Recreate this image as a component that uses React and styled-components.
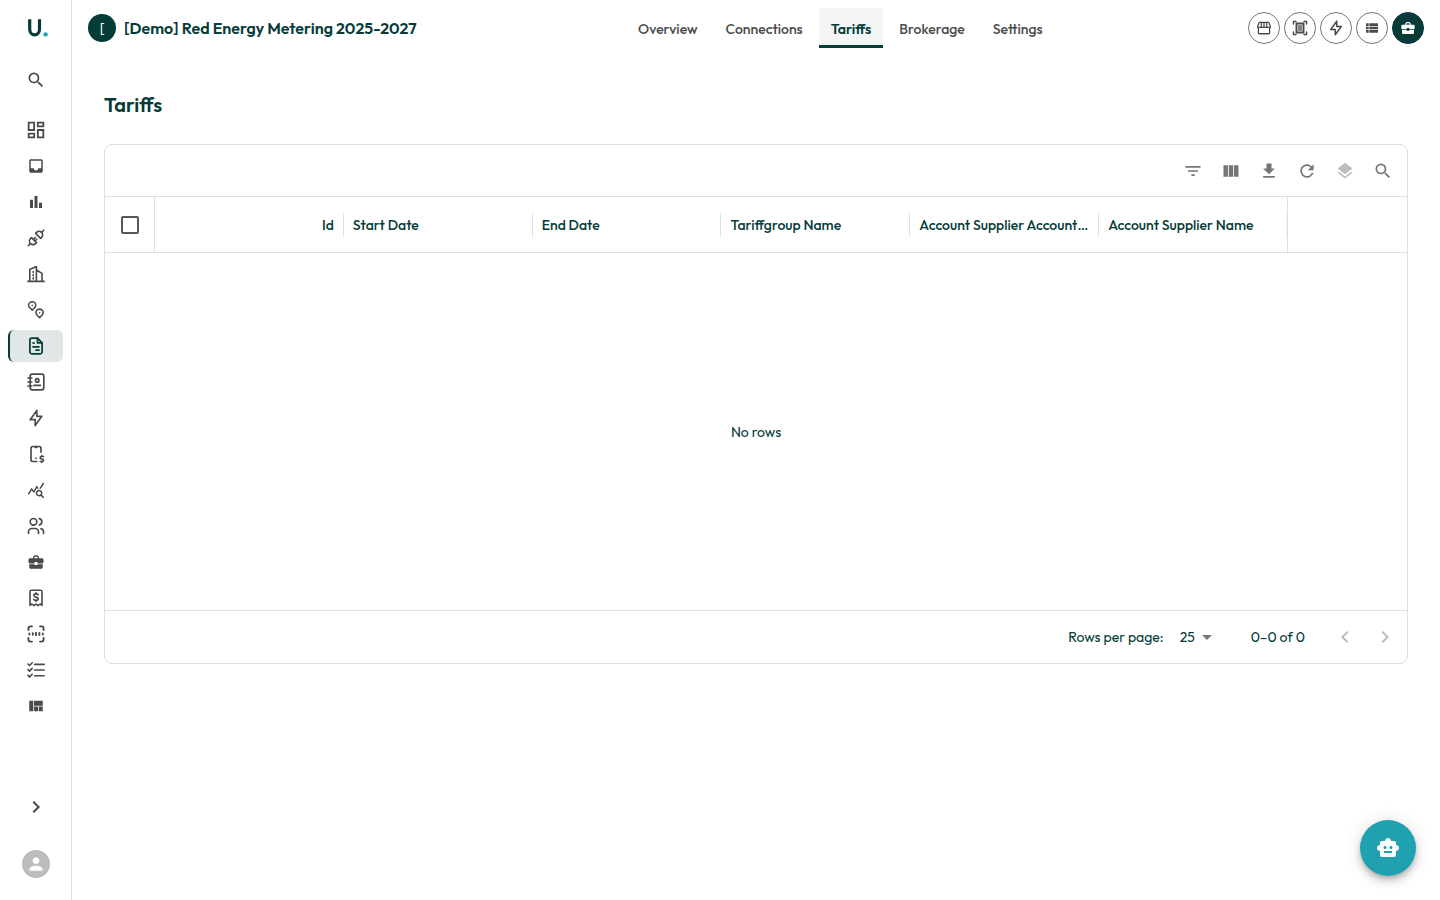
import styled, { createGlobalStyle, css } from "styled-components";
import {
  MdArrowDropDown,
  MdBarChart,
  MdBusinessCenter,
  MdChevronLeft,
  MdChevronRight,
  MdFilterList,
  MdGetApp,
  MdInbox,
  MdLayers,
  MdOutlineDashboard,
  MdPerson,
  MdQueryStats,
  MdRefresh,
  MdSearch,
  MdSmartToy,
  MdViewColumn,
  MdViewList,
  MdViewQuilt,
} from "react-icons/md";
import { TbBolt, TbDeviceMobileDollar, TbUsers } from "react-icons/tb";

const colors = {
  primary: "#053b38",
  accent: "#1fa1b0",
  icon: "#4a4a4a",
  muted: "#757575",
  disabled: "#bdbdbd",
  line: "#e0e0e0",
};

const GlobalStyle = createGlobalStyle`
  * {
    box-sizing: border-box;
  }
  body {
    margin: 0;
    background: #fff;
    color: ${colors.primary};
    font-family: Outfit, Lato, "Liberation Sans", sans-serif;
    font-size: 14px;
    line-height: 20px;
  }
  button, select {
    font: inherit;
    color: inherit;
    border: 0;
    padding: 0;
    background: none;
    cursor: pointer;
  }
  a {
    color: inherit;
    text-decoration: none;
  }
  svg {
    display: block;
    flex-shrink: 0;
  }
`;

const Page = styled.div`
  display: flex;
  min-height: 100vh;
`;

const Sidebar = styled.aside`
  width: 72px;
  flex-shrink: 0;
  border-right: 1px solid ${colors.line};
  display: flex;
  flex-direction: column;
  align-items: stretch;
  padding: 0 8px 20px;
  color: ${colors.icon};
`;

const Logo = styled.a`
  height: 56px;
  display: flex;
  align-items: center;
  justify-content: center;
  padding-left: 4px;
`;

const SideButton = styled.button`
  height: 48px;
  display: flex;
  align-items: center;
  justify-content: center;
`;

const SideNav = styled.nav`
  display: flex;
  flex-direction: column;
  gap: 4px;
  margin-top: 10px;
`;

const SideLink = styled.a`
  height: 32px;
  padding-right: 1px;
  display: flex;
  align-items: center;
  justify-content: center;
  border-left: 2px solid transparent;
  border-radius: 6px;
  ${(props) =>
    props.$active &&
    css`
      color: ${colors.primary};
      background: #e1e7e7;
      border-left-color: ${colors.primary};
    `}
`;

const SideFooter = styled.div`
  margin-top: auto;
  display: flex;
  flex-direction: column;
`;

const Avatar = styled.span`
  width: 28px;
  height: 28px;
  border-radius: 50%;
  display: flex;
  align-items: center;
  justify-content: center;
  font-size: 14px;
  font-weight: 400;
  color: #fff;
  background: ${(props) => (props.$grey ? colors.disabled : colors.primary)};
`;

const AccountButton = styled(SideButton)`
  height: 32px;
  margin-top: 17px;
`;

const Main = styled.div`
  flex: 1;
  min-width: 0;
`;

const Header = styled.header`
  height: 56px;
  padding: 0 16px;
  display: flex;
  align-items: center;
  justify-content: space-between;
`;

const Project = styled.div`
  display: flex;
  align-items: center;
  gap: 8px;
  padding-right: 16px;
  font-size: 16px;
  font-weight: 600;
`;

const Tabs = styled.nav`
  display: flex;
  gap: 4px;
`;

const Tab = styled.a`
  height: 40px;
  padding: 4px 12px 0;
  display: flex;
  align-items: center;
  font-weight: 500;
  color: ${colors.icon};
  border-bottom: 3px solid transparent;
  ${(props) =>
    props.$active &&
    css`
      font-weight: 600;
      color: ${colors.primary};
      background: #f4f6f6;
      border-bottom-color: ${colors.primary};
    `}
`;

const Actions = styled.div`
  display: flex;
  gap: 4px;
`;

const RoundButton = styled.button`
  width: 32px;
  height: 32px;
  border-radius: 50%;
  display: flex;
  align-items: center;
  justify-content: center;
  && {
    color: ${(props) => (props.$filled ? "#fff" : colors.icon)};
    background: ${(props) => (props.$filled ? colors.primary : "#fff")};
    border: 1px solid ${(props) => (props.$filled ? colors.primary : "#757877")};
  }
`;

const Content = styled.main`
  padding: 33px 32px 32px;
`;

const Title = styled.h1`
  margin: 0 0 23px;
  font-size: 20px;
  line-height: 32px;
  font-weight: 600;
`;

const Grid = styled.section`
  border: 1px solid ${colors.line};
  border-radius: 8px;
`;

const Toolbar = styled.div`
  height: 51px;
  padding: 0 8px;
  display: flex;
  align-items: center;
  justify-content: flex-end;
  gap: 6px;
`;

const ToolButton = styled.button`
  width: 32px;
  height: 32px;
  display: flex;
  align-items: center;
  justify-content: center;
  && {
    color: ${colors.muted};
  }
  &&:disabled {
    color: ${colors.disabled};
    cursor: default;
  }
`;

const Table = styled.table`
  width: 100%;
  table-layout: fixed;
  border-collapse: separate;
  border-spacing: 0;
`;

const HeadCell = styled.th`
  height: 57px;
  padding: 0;
  width: ${(props) => props.$width || "auto"};
  border: 0 solid ${colors.line};
  border-width: 1px ${(props) => (props.$edge ? "1px" : "0")} 1px 0;
  font-weight: 500;
`;

const ColumnTitle = styled.div`
  height: 24px;
  padding: 0 9px;
  line-height: 24px;
  text-align: ${(props) => props.$align || "left"};
  border-right: 1px solid ${(props) => (props.$last ? "#f0f0f0" : colors.line)};
  overflow: hidden;
  text-overflow: ellipsis;
  white-space: nowrap;
`;

const Checkbox = styled.input`
  appearance: none;
  display: block;
  width: 18px;
  height: 18px;
  margin: 0 auto;
  border: 2px solid #555857;
  border-radius: 2px;
  &:checked {
    background: ${colors.primary};
  }
`;

const EmptyCell = styled.td`
  height: 357px;
  padding: 0;
  text-align: center;
`;

const Pagination = styled.div`
  height: 53px;
  padding: 0 2px 0 16px;
  display: flex;
  align-items: center;
  justify-content: flex-end;
  border-top: 1px solid ${colors.line};
`;

const SelectWrap = styled.span`
  position: relative;
  margin: 0 32px 0 8px;
  svg {
    position: absolute;
    right: 0;
    top: 0;
    color: ${colors.muted};
    pointer-events: none;
  }
`;

const Select = styled.select`
  appearance: none;
  width: 47px;
  height: 24px;
  && {
    padding: 0 23px 0 8px;
  }
`;

const PagerButtons = styled.div`
  display: flex;
  margin-left: 20px;
`;

const PagerButton = styled(ToolButton)`
  width: 40px;
  height: 40px;
`;

const ChatButton = styled.button`
  position: fixed;
  right: 24px;
  bottom: 24px;
  width: 56px;
  height: 56px;
  border-radius: 50%;
  display: flex;
  align-items: center;
  justify-content: center;
  && {
    color: #fff;
    background: ${colors.accent};
  }
  box-shadow: 0 3px 5px -1px rgba(0, 0, 0, 0.2), 0 6px 10px rgba(0, 0, 0, 0.14),
    0 1px 18px rgba(0, 0, 0, 0.12);
`;

const LineIcon = ({ size = 20, width = 1.6, children }) => (
  <svg
    width={size}
    height={size}
    viewBox="0 0 20 20"
    fill="none"
    stroke="currentColor"
    strokeWidth={width}
    strokeLinecap="round"
    strokeLinejoin="round"
    aria-hidden="true"
  >
    {children}
  </svg>
);

const LogoMark = () => (
  <svg width="22" height="20" viewBox="0 0 22 20" fill="none" aria-hidden="true">
    <path
      d="M2.7 1.2v10a4.8 5.6 0 0 0 9.8 0V1.2"
      stroke={colors.primary}
      strokeWidth="3.2"
    />
    <circle cx="18.6" cy="16.4" r="2.2" fill={colors.accent} />
  </svg>
);

const PlugIcon = () => (
  <LineIcon width={1.6}>
    <path d="M2.2 17.8l2.2-2.2M15.6 4.4l2.2-2.2" />
    <path d="M5.5 9.6l5 5-1 1a3.5 3.5 0 0 1-5-5z" />
    <path d="M9.6 5.4l5 5 1-1a3.5 3.5 0 0 0-5-5z" />
    <path d="M7.6 11.2l1.6-1.6M9.2 12.8l1.6-1.6" />
  </LineIcon>
);

const BuildingIcon = () => (
  <LineIcon width={1.6}>
    <path d="M1.8 17.4h16.4M3.8 17.4V5.4l6.6-2.8v14.8M10.4 6l5.6 3.4v8" />
    <path d="M7.2 7.5v7.5" strokeDasharray="1 2.2" />
  </LineIcon>
);

const PinsIcon = () => (
  <LineIcon width={1.6}>
    <path d="M6.2 10.2C4.4 8.6 2.6 7 2.6 5.3a3.6 3.6 0 0 1 7.2 0c0 1.7-1.8 3.3-3.6 4.9z" />
    <path d="M13.6 17.6c-1.8-1.6-3.6-3.2-3.6-4.9a3.6 3.6 0 0 1 7.2 0c0 1.7-1.8 3.3-3.6 4.9z" />
    <path d="M6.2 5.3v.1M13.6 12.7v.1" />
  </LineIcon>
);

const ContractIcon = () => (
  <LineIcon width={1.7}>
    <path d="M11.5 2.2H5.7a1.8 1.8 0 0 0-1.8 1.8v12a1.8 1.8 0 0 0 1.8 1.8h8.6a1.8 1.8 0 0 0 1.8-1.8V6.8z" />
    <path d="M11.5 2.2v4.6h4.6M7 7h1.2M7 10.8h6M10 14.2h3" />
  </LineIcon>
);

const ContactsIcon = () => (
  <LineIcon width={1.7}>
    <rect x="4.2" y="2.2" width="13.6" height="15.6" rx="2" />
    <circle cx="11.2" cy="8.4" r="1.7" />
    <path d="M8 13.4h6.4M2 6h3.8M2 10h3.8M2 14h3.8" />
  </LineIcon>
);

const ReceiptIcon = () => (
  <LineIcon width={1.6}>
    <path d="M4 17.4V3.6a1.4 1.4 0 0 1 1.4-1.4h9.2A1.4 1.4 0 0 1 16 3.6v13.8l-2-1.4-2 1.6-2-1.6-2 1.6L6 16z" />
    <path d="M12.2 6.9c-.4-.7-1.2-1-2.2-1-1.2 0-2.1.6-2.1 1.6 0 2.3 4.4 1 4.4 3.3 0 1-1 1.6-2.3 1.6-1 0-1.9-.4-2.3-1.1M10 4.7v1.2M10 12.4v1.2" />
  </LineIcon>
);

const ScanIcon = () => (
  <LineIcon width={1.9}>
    <path d="M2.4 6V4.4a2 2 0 0 1 2-2H6M14 2.4h1.6a2 2 0 0 1 2 2V6M17.6 14v1.6a2 2 0 0 1-2 2H14M6 17.6H4.4a2 2 0 0 1-2-2V14" />
    <path d="M3.4 9.4v1.2M6.8 9.2v1.6M10 8.8v2.4M13.4 9v2M16.8 9.4v1.2" />
  </LineIcon>
);

const ChecklistIcon = () => (
  <LineIcon width={1.6}>
    <path d="M8.6 4.4h9.6M8.6 10h9.6M8.6 15.8h9.6" />
    <path d="M2 4l1.5 1.5 2.7-2.7M2 9.6l1.5 1.5 2.7-2.7M2 15.4l1.5 1.5 2.7-2.7" />
  </LineIcon>
);

const StoreIcon = () => (
  <LineIcon size={16} width={1.6}>
    <path d="M3 9.4V16a1.2 1.2 0 0 0 1.2 1.2h11.6A1.2 1.2 0 0 0 17 16V9.4" />
    <path d="M4 3h12l1.8 4.6v1.6H2.2V7.6zM7 3l-.6 6M10 3v6M13 3l.6 6" />
  </LineIcon>
);

const MeterIcon = () => (
  <LineIcon size={16} width={1.8}>
    <path d="M1.8 5V1.8H5M15 1.8h3.2V5M18.2 15v3.2H15M5 18.2H1.8V15" />
    <rect x="5.6" y="4.4" width="8.8" height="11.2" strokeWidth="2.4" />
    <rect x="7.6" y="6.4" width="4.8" height="7.2" fill="currentColor" stroke="none" opacity="0.7" />
  </LineIcon>
);

const sideLinks = [
  { label: "Dashboard", icon: <MdOutlineDashboard size={22} /> },
  { label: "Inbox", icon: <MdInbox size={18} /> },
  { label: "Reports", icon: <MdBarChart size={18} /> },
  { label: "Connections", icon: <PlugIcon /> },
  { label: "Buildings", icon: <BuildingIcon /> },
  { label: "Locations", icon: <PinsIcon /> },
  { label: "Contracts", icon: <ContractIcon />, active: true },
  { label: "Contacts", icon: <ContactsIcon /> },
  { label: "Energy", icon: <TbBolt size={20} /> },
  { label: "Mobile payments", icon: <TbDeviceMobileDollar size={20} /> },
  { label: "Analysis", icon: <MdQueryStats size={18} /> },
  { label: "Users", icon: <TbUsers size={20} /> },
  { label: "Projects", icon: <MdBusinessCenter size={18} /> },
  { label: "Invoices", icon: <ReceiptIcon /> },
  { label: "Scan", icon: <ScanIcon /> },
  { label: "Tasks", icon: <ChecklistIcon /> },
  { label: "Views", icon: <MdViewQuilt size={18} /> },
];

const tabs = ["Overview", "Connections", "Tariffs", "Brokerage", "Settings"];

const actions = [
  { label: "Suppliers", icon: <StoreIcon /> },
  { label: "Meters", icon: <MeterIcon /> },
  { label: "Energy", icon: <TbBolt size={18} /> },
  { label: "List", icon: <MdViewList size={16} /> },
  { label: "Projects", icon: <MdBusinessCenter size={16} />, filled: true },
];

const tools = [
  { label: "Filters", icon: <MdFilterList size={20} /> },
  { label: "Columns", icon: <MdViewColumn size={20} /> },
  { label: "Export", icon: <MdGetApp size={20} /> },
  { label: "Refresh", icon: <MdRefresh size={20} /> },
  { label: "Group", icon: <MdLayers size={20} />, disabled: true },
  { label: "Search", icon: <MdSearch size={20} /> },
];

const columns = [
  { title: "Id", align: "right" },
  { title: "Start Date" },
  { title: "End Date" },
  { title: "Tariffgroup Name" },
  { title: "Account Supplier Account…" },
  { title: "Account Supplier Name" },
];

const TariffsGrid = () => (
  <Grid>
    <Toolbar>
      {tools.map((tool) => (
        <ToolButton key={tool.label} aria-label={tool.label} disabled={tool.disabled}>
          {tool.icon}
        </ToolButton>
      ))}
    </Toolbar>
    <Table>
      <thead>
        <tr>
          <HeadCell $width="50px" $edge>
            <Checkbox type="checkbox" aria-label="Select all rows" />
          </HeadCell>
          {columns.map((column, i) => (
            <HeadCell key={column.title} $edge={i === columns.length - 1}>
              <ColumnTitle $align={column.align} $last={i === columns.length - 1}>
                {column.title}
              </ColumnTitle>
            </HeadCell>
          ))}
          <HeadCell $width="119px" />
        </tr>
      </thead>
      <tbody>
        <tr>
          <EmptyCell colSpan={columns.length + 2}>No rows</EmptyCell>
        </tr>
      </tbody>
    </Table>
    <Pagination>
      <label htmlFor="rows">Rows per page:</label>
      <SelectWrap>
        <Select id="rows" defaultValue="25">
          <option>10</option>
          <option>25</option>
          <option>50</option>
        </Select>
        <MdArrowDropDown size={24} />
      </SelectWrap>
      <span>0–0 of 0</span>
      <PagerButtons>
        <PagerButton aria-label="Previous page" disabled>
          <MdChevronLeft size={24} />
        </PagerButton>
        <PagerButton aria-label="Next page" disabled>
          <MdChevronRight size={24} />
        </PagerButton>
      </PagerButtons>
    </Pagination>
  </Grid>
);

const App = () => (
  <Page>
    <GlobalStyle />
    <Sidebar>
      <Logo href="#" aria-label="Home">
        <LogoMark />
      </Logo>
      <SideButton aria-label="Search">
        <MdSearch size={20} />
      </SideButton>
      <SideNav>
        {sideLinks.map((link) => (
          <SideLink key={link.label} href="#" aria-label={link.label} $active={link.active}>
            {link.icon}
          </SideLink>
        ))}
      </SideNav>
      <SideFooter>
        <SideButton aria-label="Expand menu">
          <MdChevronRight size={24} />
        </SideButton>
        <AccountButton aria-label="Account">
          <Avatar $grey>
            <MdPerson size={20} />
          </Avatar>
        </AccountButton>
      </SideFooter>
    </Sidebar>
    <Main>
      <Header>
        <Project>
          <Avatar>[</Avatar>
          [Demo] Red Energy Metering 2025-2027
        </Project>
        <Tabs>
          {tabs.map((tab) => (
            <Tab key={tab} href="#" $active={tab === "Tariffs"}>
              {tab}
            </Tab>
          ))}
        </Tabs>
        <Actions>
          {actions.map((action) => (
            <RoundButton key={action.label} aria-label={action.label} $filled={action.filled}>
              {action.icon}
            </RoundButton>
          ))}
        </Actions>
      </Header>
      <Content>
        <Title>Tariffs</Title>
        <TariffsGrid />
      </Content>
    </Main>
    <ChatButton aria-label="Open assistant">
      <MdSmartToy size={24} />
    </ChatButton>
  </Page>
);

export default App;
